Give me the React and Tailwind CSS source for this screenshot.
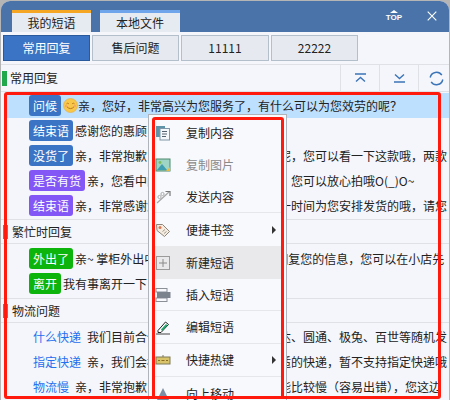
import React from "react";

const FONT = '"Noto Sans CJK SC", "Noto Sans", sans-serif';

function Smile() {
  return (
    <svg width="15" height="15" viewBox="0 0 15 15" className="shrink-0">
      <circle cx="7.5" cy="7.5" r="7" fill="#f8c84a" stroke="#e8a93a" strokeWidth="0.6" />
      <path d="M3.5 5.8q1.2-1.2 2.4 0M9.1 5.8q1.2-1.2 2.4 0" fill="none" stroke="#b9761c" strokeWidth="0.9" />
      <path d="M3.8 8.6q3.7 4 7.4 0" fill="none" stroke="#b9761c" strokeWidth="1" />
      <circle cx="3" cy="8" r="1.2" fill="#f5a66a" />
      <circle cx="12" cy="8" r="1.2" fill="#f5a66a" />
    </svg>
  );
}

function Row({ tag, color, text, emoji, active, link }) {
  return (
    <div className={`h-[25px] flex items-center pl-[24px] whitespace-nowrap overflow-hidden text-[12px] text-[#222] ${active ? "bg-[#bde0ff]" : ""}`}>
      {link ? (
        <span className="pl-[4px] pr-[6px] text-[#2470ee]">{tag}</span>
      ) : (
        <span className={`h-[21px] leading-[21px] px-[4px] rounded-[3px] text-white mr-[2px] shrink-0 ${color}`}>{tag}</span>
      )}
      {emoji && <Smile />}
      <span>{text}</span>
    </div>
  );
}

function Section({ title, className }) {
  return (
    <div className={`h-[25px] flex items-center border-y border-[#dfe1e6] text-[12px] text-[#222] pl-[2px] gap-[4px] ${className}`}>
      <span className="w-[5px] h-[14px] bg-[#4f9a5c]" />
      <span>{title}</span>
    </div>
  );
}

function MenuItem({ label, icon, hover, disabled, arrow, line, short }) {
  return (
    <div className={`flex items-center text-[12px] shrink-0 ${short ? "h-[32px]" : "h-[33px]"} ${hover ? "bg-[#e9e9ec]" : ""} ${line ? "border-b border-[#e6e7ea]" : ""} ${disabled ? "text-[#8a8a8a]" : "text-[#222]"}`}>
      <span className="w-[34px] pl-[3px] flex items-center shrink-0">{icon}</span>
      <span className="flex-1">{label}</span>
      {arrow && <span className="mr-[7px] border-y-[4px] border-y-transparent border-l-[4px] border-l-[#333]" />}
    </div>
  );
}

const I = ({ children }) => (
  <svg width="16" height="16" viewBox="0 0 16 16">{children}</svg>
);

const icons = {
  copy: (
    <I>
      <rect x="1" y="1" width="9" height="11" fill="#5f93a8" />
      <rect x="5" y="3.5" width="9.5" height="11.5" fill="#f5f8fb" stroke="#7f97a8" />
      <path d="M7 6.5h5M7 9h5M7 11.5h4" stroke="#52636f" />
    </I>
  ),
  image: (
    <I>
      <rect x="1" y="2" width="14" height="12" fill="#9ed5c4" stroke="#4e8a6e" />
      <path d="M2 13l5-6 5 6z" fill="#3f9fb0" />
      <circle cx="5" cy="5.5" r="1.4" fill="#7cbc5a" />
      <path d="M11 14l4-4v4z" fill="#f0b93a" />
    </I>
  ),
  send: (
    <I>
      <path d="M2 14L14 3" stroke="#a5a5a5" strokeWidth="1.2" />
      <path d="M10.5 2.5H15V7" fill="none" stroke="#777" strokeWidth="1.2" />
      <circle cx="4.5" cy="8" r="1.6" fill="none" stroke="#aaa" />
      <circle cx="7.5" cy="5" r="1.6" fill="none" stroke="#aaa" />
    </I>
  ),
  tag: (
    <I>
      <path d="M1.5 2.5h6l7 7-5 5-7.5-6z" fill="#f5ecdf" stroke="#8d8579" />
      <circle cx="5" cy="5.5" r="1.5" fill="#d57a58" />
      <path d="M7.5 9.5l2.5-2M9 11.5l2.5-2" stroke="#a09a90" />
    </I>
  ),
  plus: (
    <I>
      <rect x="1.5" y="1.5" width="13" height="13" fill="none" stroke="#9b9b9b" />
      <path d="M8 4v8M4 8h8" stroke="#8a8a8a" />
    </I>
  ),
  insert: (
    <I>
      <rect x="1" y="1.5" width="11" height="3.5" fill="none" stroke="#8b8f96" />
      <rect x="1" y="11" width="11" height="3.5" fill="none" stroke="#8b8f96" />
      <rect x="2" y="5" width="13.5" height="6" fill="#7d838c" />
    </I>
  ),
  edit: (
    <I>
      <path d="M3 11.5L10.5 3l3 2.5L6 13.5H3z" fill="#fff" stroke="#222" />
      <path d="M6 10.5L11 5l1.5 1.2L7 12z" fill="#1fa870" />
      <path d="M1 15h14" stroke="#444" />
    </I>
  ),
  key: (
    <I>
      <rect x="1" y="5" width="14" height="7" fill="#d8c36a" stroke="#7d7a58" />
      <path d="M3 8.5h2M6.5 8.5h3M11 8.5h2" stroke="#8a6d20" strokeWidth="1.2" />
      <path d="M8 3v2" stroke="#7d7a58" />
    </I>
  ),
  up: (
    <I>
      <path d="M8 2l6 12H2z" fill="#7c8ea5" />
    </I>
  ),
};

export default function App() {
  return (
    <div className="relative w-[450px] h-[400px] overflow-hidden bg-[#b5b5b5]" style={{ fontFamily: FONT }}>
      <div className="w-[448px] h-full ml-px mt-px rounded-t-[9px] overflow-hidden bg-[#f5f6fb]">
        {/* title bar */}
        <div className="h-[31px] bg-[#4a74a9] flex items-end pl-[11px]">
          <div className="w-[79px] h-[22px] border-t-[3px] border-[#f5a623] bg-[#e6ebf2] text-[12px] text-[#222] flex items-center justify-center">我的短语</div>
          <div className="w-[80px] h-[22px] ml-[9px] border-t-[3px] border-[#6fa5ea] bg-[#e6ebf2] text-[12px] text-[#222] flex items-center justify-center">本地文件</div>
          <div className="ml-auto mr-[12px] mb-[10px] flex items-center gap-[25px] text-white">
            <div className="flex flex-col items-center text-[8px] leading-[9px] font-bold">
              <span className="border-x-[4px] border-x-transparent border-b-[3px] border-b-white" />
              <span style={{ fontFamily: '"Liberation Sans", sans-serif' }}>TOP</span>
            </div>
            <svg width="10" height="10" viewBox="0 0 10 10"><path d="M.7.7l8.6 8.6M9.3.7L.7 9.3" stroke="#fff" strokeWidth="1.1" /></svg>
          </div>
        </div>
        {/* sub tabs */}
        <div className="h-[32px] flex items-center pl-[2px] gap-[2px] text-[12px] text-[#222]">
          <div className="w-[87px] h-[26px] flex items-center justify-center bg-[#3b74c4] border border-[#2a5a9c] text-white">常用回复</div>
          <div className="w-[87px] h-[26px] flex items-center justify-center bg-[#e6eaf0] border border-[#b4bfcc]">售后问题</div>
          <div className="w-[88px] h-[26px] flex items-center justify-center bg-[#e6eaf0] border border-[#b4bfcc]">11111</div>
          <div className="w-[87px] h-[26px] flex items-center justify-center bg-[#e6eaf0] border border-[#b4bfcc]">22222</div>
        </div>
        {/* section header with tools */}
        <div className="h-[28px] flex items-center border-y border-[#dfe1e6] text-[12px] text-[#222]">
          <span className="w-[5px] h-[15px] bg-[#21a84c] ml-px mr-[3px]" />
          <span className="flex-1">常用回复</span>
          <div className="flex h-full">
            {[
              <path key="a" d="M1 1h11M2 8.5L6.5 4.5l4.5 4" fill="none" stroke="#3b74b8" strokeWidth="1.4" />,
              <path key="b" d="M2 1.5L6.5 5.5l4.5-4M1 9h11" fill="none" stroke="#3b74b8" strokeWidth="1.4" />,
            ].map((p, i) => (
              <div key={i} className="w-[39px] flex items-center justify-center border-l border-[#dfe1e6]">
                <svg width="13" height="10" viewBox="0 0 13 10">{p}</svg>
              </div>
            ))}
            <div className="w-[31px] flex items-center pl-[10px] border-l border-[#dfe1e6]">
              <svg width="15" height="15" viewBox="0 0 15 15">
                <path d="M1.2 6.5A6.4 6.4 0 0 1 12.8 4.2M13.8 8.5A6.4 6.4 0 0 1 2.2 10.8" fill="none" stroke="#3b74b8" strokeWidth="1.5" />
              </svg>
            </div>
          </div>
        </div>
        {/* list */}
        <div className="pt-px">
          <div className="pl-[4px]">
            <Row active tag="问候" color="bg-[#3b74c4]" emoji text="亲，您好，非常高兴为您服务了，有什么可以为您效劳的呢？" />
            <Row tag="结束语" color="bg-[#3b74c4]" text="感谢您的惠顾，欢迎您下次光临！" />
            <Row tag="没货了" color="bg-[#3b74c4]" text="亲，非常抱歉，您看中的这款没有货了呢，您可以看一下这款哦，两款" />
            <Row tag="是否有货" color="bg-[#8257f5]" text="亲，您看中的这款宝贝现在有货的呢，您可以放心拍哦O(_)O~" />
            <Row tag="结束语" color="bg-[#8257f5]" text="亲，非常感谢您的惠顾，我们将会在第一时间为您安排发货的哦，请您" />
          </div>
          <Section title="繁忙时回复" className="mt-px" />
          <div className="pl-[4px] pt-[2px]">
            <Row tag="外出了" color="bg-[#0cb40c]" text="亲~ 掌柜外出中，回来后会在第一时间回复您的信息，您可以在小店先" />
            <Row tag="离开" color="bg-[#0cb40c]" text="我有事离开一下，稍后回复您哦" />
          </div>
          <Section title="物流问题" className="mt-[2px]" />
          <div className="pl-[4px] pt-px">
            <Row link tag="什么快递" text="我们目前合作的快递申通、中通、韵达、圆通、极兔、百世等随机发" />
            <Row link tag="指定快递" text="亲，我们会根据您的收货地址选择合适的快递，暂不支持指定快递哦" />
            <Row link tag="物流慢" text="亲，非常抱歉，最近快递发货量较大可能比较慢（容易出错），您这边" />
          </div>
        </div>
      </div>

      {/* context menu */}
      <div className="absolute left-[148px] top-[114px] w-[139px] h-[300px] bg-[#f8f9fd] border border-[#b0b4ba] px-[3px] pt-[2px] flex flex-col">
        <MenuItem short label="复制内容" icon={icons.copy} />
        <MenuItem short label="复制图片" icon={icons.image} disabled />
        <MenuItem short label="发送内容" icon={icons.send} line />
        <MenuItem label="便捷书签" icon={icons.tag} arrow />
        <MenuItem label="新建短语" icon={icons.plus} hover />
        <MenuItem short label="插入短语" icon={icons.insert} line />
        <MenuItem label="编辑短语" icon={icons.edit} line />
        <MenuItem label="快捷热键" icon={icons.key} arrow line />
        <MenuItem label="向上移动" icon={icons.up} />
      </div>

      {/* red annotation boxes */}
      <div className="absolute left-[4px] top-[92px] w-[437px] h-[307px] border-[3px] border-[#ff1a0d] rounded-[3px] pointer-events-none" />
      <div className="absolute left-[152px] top-[117px] w-[132px] h-[282px] border-[3px] border-[#ff1a0d] rounded-[3px] pointer-events-none" />
    </div>
  );
}
